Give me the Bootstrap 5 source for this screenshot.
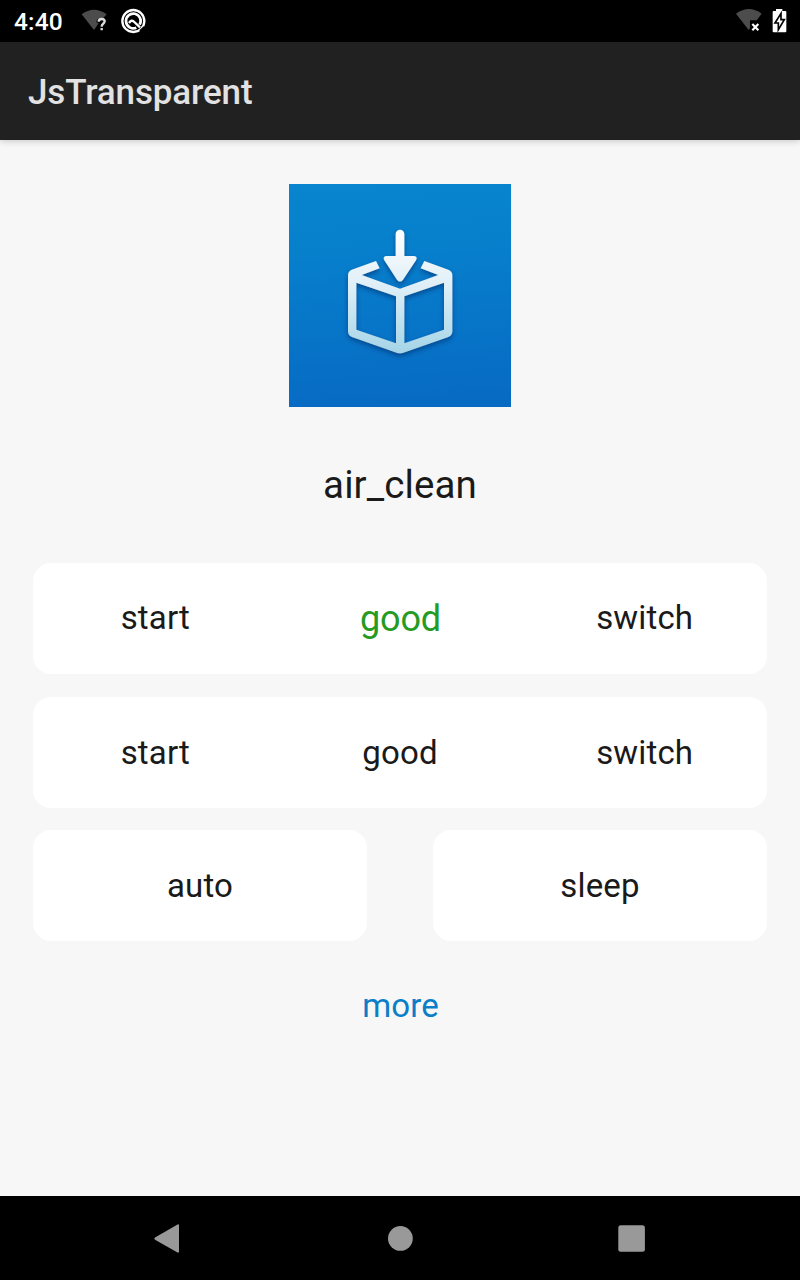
<!DOCTYPE html>
<html lang="en">
<head>
<meta charset="utf-8">
<meta name="viewport" content="width=device-width, initial-scale=1">
<title>JsTransparent</title>
<link href="https://cdn.jsdelivr.net/npm/bootstrap@5.3.0/dist/css/bootstrap.min.css" rel="stylesheet">
<style>
  body { font-family: Roboto, sans-serif; background: #f7f7f7; color: #1a1a1a; height: 1280px; overflow: hidden; }
  svg { display: block; flex: none; }
  .status-bar { height: 42px; background: #000; padding: 0 13px 0 14px; }
  .clock { font-size: 24.5px; font-weight: 500; line-height: 42px; width: 67px; padding-top: 2px; letter-spacing: .15px; }
  .app-bar { height: 98px; background: #212121; color: #e2e2e2; padding: 2px 28px 0; box-shadow: 0 1px 7px rgba(0,0,0,.2); }
  .app-title { font-size: 35px; font-weight: 500; line-height: 1; letter-spacing: -.13px; }
  .content-area { padding: 44px 33px 0; }
  .device-name { font-size: 38.5px; line-height: 46px; letter-spacing: .1px; margin: 55px 0; }
  .tile { height: 111px; background: #fff; border-radius: 18px; font-size: 33px; letter-spacing: .15px; line-height: 1; }
  .tile-large { font-size: 36px; color: #259b24; letter-spacing: -.1px; padding-left: 1px; }
  .tile-raised { padding-bottom: 2px; }
  .tile-half { width: 334px; }
  .more-link { font-size: 33px; letter-spacing: .15px; line-height: 40px; color: #0a7fc8; margin-top: 45px; padding-left: 1px; }
  .nav-keys { height: 84px; background: #000; }
</style>
</head>
<body class="d-flex flex-column">
<header class="status-bar d-flex align-items-center text-white">
  <span class="clock">4:40</span>
  <svg width="28" height="24" viewBox="0 0 84 72"><path d="M2 16Q39-11 77 16L67 27Q47 25 46 40L53 43L39 63Z" fill="#4c4c4c"/><path d="M53 38Q53 30 62 30Q71 30 71 37Q71 41 66 45Q62 48 62 53M62 57V64" fill="none" stroke="#ddd" stroke-width="7"/></svg>
  <svg class="ms-2 ps-1" width="33" height="26" viewBox="0 0 87 78"><circle cx="37" cy="39" r="33" fill="none" stroke="#fff" stroke-width="7"/><path d="M56 50A22 22 0 1 0 46 59" fill="none" stroke="#fff" stroke-width="8"/><path d="M24 45Q32 33 40 42L57 58" fill="none" stroke="#fff" stroke-width="7"/><path d="M57 69l14-13" stroke="#000" stroke-width="6"/></svg>
  <svg class="ms-auto" width="27" height="26" viewBox="0 0 81 78"><path d="M0 17Q39-11 77 17L62 37H42V60L38 66Z" fill="#4c4c4c"/><path d="M49 48L67 67M67 48L49 67" stroke="#fff" stroke-width="6.5"/></svg>
  <svg width="15" height="24" viewBox="0 0 45 72" style="margin-left:9px"><path d="M12 0H31V6H40Q43 6 43 9V67Q43 70 40 70H5Q2 70 2 67V9Q2 6 5 6H12Z" fill="#fff"/><path d="M27 13L9 42H19V62L37 32H27Z" fill="#fff" stroke="#000" stroke-width="5"/></svg>
</header>
<div class="app-bar d-flex align-items-center">
  <h1 class="app-title m-0">JsTransparent</h1>
</div>
<main class="content-area flex-grow-1">
  <svg class="mx-auto" width="222" height="223" viewBox="27 24 666 669" role="img" aria-label="Package">
    <defs>
      <linearGradient id="sky" x1="0" y1="0" x2=".06" y2="1"><stop stop-color="#0885ce"/><stop offset=".3" stop-color="#0780cc"/><stop offset="1" stop-color="#076bc4"/></linearGradient>
      <linearGradient id="ice" gradientUnits="userSpaceOnUse" x1="0" y1="160" x2="0" y2="532"><stop stop-color="#fff"/><stop offset=".45" stop-color="#e0eff7"/><stop offset="1" stop-color="#a4d4e7"/></linearGradient>
      <filter id="drop" x="-20%" y="-20%" width="140%" height="140%"><feDropShadow dx="0" dy="8" stdDeviation="8" flood-color="#003270" flood-opacity=".65"/></filter>
    </defs>
    <path d="M27 24H693V693H27Z" fill="url(#sky)"/>
    <g fill="url(#ice)" filter="url(#drop)">
      <path fill-rule="evenodd" d="M288 255L215 281Q204 286 204 298V466Q204 478 216 483L350 530Q360 534 370 530L505 483Q517 478 517 466V298Q517 286 505 281L433 255L422 277L475 297L360 338L245 297L299 277ZM229 320L348 361V502L229 461ZM373 361L492 320V461L373 502Z"/>
      <path d="M347 174a13 13 0 0 1 26 0V240H403Q414 242 408 253L369 311Q360 322 351 311L313 253Q307 242 318 240H347Z"/>
    </g>
  </svg>
  <div class="device-name text-center">air_clean</div>
  <div class="tile d-flex align-items-center text-center">
    <div class="col-4 tile-raised">start</div><div class="col-4 tile-large">good</div><div class="col-4 tile-raised">switch</div>
  </div>
  <div class="tile d-flex align-items-center text-center" style="margin-top:23px">
    <div class="col-4">start</div><div class="col-4">good</div><div class="col-4">switch</div>
  </div>
  <div class="d-flex justify-content-between" style="margin-top:22px">
    <div class="tile tile-half d-flex align-items-center justify-content-center">auto</div>
    <div class="tile tile-half d-flex align-items-center justify-content-center">sleep</div>
  </div>
  <div class="more-link text-center">more</div>
</main>
<nav class="nav-keys">
  <svg width="800" height="84" viewBox="0 0 800 84" fill="#999"><path d="M178 28.3Q179 28 179 29.5V55.5Q179 57 177.5 56.5L155 43.7Q153.6 42.5 155 41.5Z"/><circle cx="400.4" cy="42.4" r="12.4"/><rect x="618.3" y="29.2" width="26.6" height="26.6" rx="2.5"/></svg>
</nav>
<script src="https://cdn.jsdelivr.net/npm/bootstrap@5.3.0/dist/js/bootstrap.bundle.min.js"></script>
</body>
</html>
